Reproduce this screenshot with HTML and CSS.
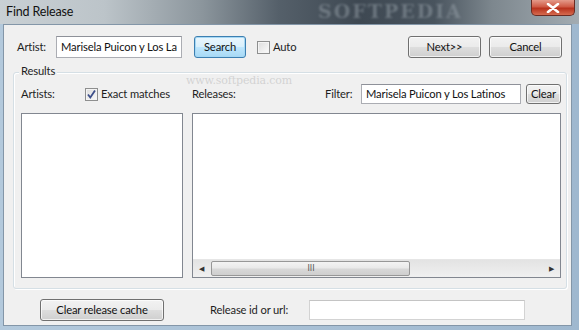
FILE: index.html
```html
<!DOCTYPE html>
<html lang="en">
<head>
    <meta charset="UTF-8">
    <title>Find Release</title>
    <link rel="stylesheet" href="styles.css">
</head>
<body>
    <div class="window">
        <div class="titlebar">
            <span class="title">Find Release</span>
            <span class="watermark">SOFTPEDIA</span>
            <span class="close">
                <svg width="14" height="10" viewBox="0 0 14 10">
                    <path d="M2 1 L12 9 M12 1 L2 9" stroke="#fff" stroke-width="2.6" stroke-linecap="round"/>
                </svg>
            </span>
        </div>
        <div class="client">
            <div class="top-row">
                <span class="lbl artist-lbl">Artist:</span>
                <input type="text" class="field artist-field" value="Marisela Puicon y Los Latinos">
                <button class="btn focused search-btn">Search</button>
                <span class="check auto-check"></span>
                <span class="lbl">Auto</span>
                <span class="spacer"></span>
                <button class="btn wide-btn">Next&gt;&gt;</button>
                <button class="btn wide-btn cancel-btn">Cancel</button>
            </div>

            <div class="group">
                <span class="legend">Results</span>
                <span class="site-mark">www.softpedia.com</span>
                <div class="group-row">
                    <span class="lbl artists-lbl">Artists:</span>
                    <span class="check checked">
                        <svg width="11" height="11" viewBox="0 0 11 11">
                            <path d="M2 5.5 L4.3 8.5 L9 1.5" fill="none" stroke="#3d4f8a" stroke-width="1.8"/>
                        </svg>
                    </span>
                    <span class="lbl exact-lbl">Exact matches</span>
                    <span class="lbl releases-lbl">Releases:</span>
                    <span class="spacer"></span>
                    <span class="lbl filter-lbl">Filter:</span>
                    <input type="text" class="field filter-field" value="Marisela Puicon y Los Latinos">
                    <button class="btn small-btn">Clear</button>
                </div>
                <div class="lists">
                    <div class="listbox artists-list"></div>
                    <div class="listbox releases-list">
                        <div class="hscroll">
                            <span class="arrow">&#9664;</span>
                            <div class="track">
                                <div class="thumb"><span class="grip">III</span></div>
                            </div>
                            <span class="arrow">&#9654;</span>
                        </div>
                    </div>
                </div>
            </div>

            <div class="bottom-row">
                <button class="btn cache-btn">Clear release cache</button>
                <span class="lbl release-lbl">Release id or url:</span>
                <input type="text" class="field release-field">
            </div>
        </div>
    </div>
</body>
</html>
```

FILE: styles.css
```css
html, body {
    margin: 0;
    padding: 0;
}
body {
    width: 579px;
    height: 330px;
    overflow: hidden;
    font-family: Lato, "Liberation Sans", sans-serif;
    font-size: 11.2px;
    letter-spacing: -0.15px;
    color: #1e1e1e;
}
.window {
    width: 579px;
    height: 330px;
    box-sizing: border-box;
    display: flex;
    flex-direction: column;
    background: linear-gradient(90deg, #b3c9dc, #9fb8cf);
    padding: 0 7px 4px 3px;
}
.titlebar {
    height: 24px;
    margin: 0 -7px 0 -3px;
    display: flex;
    align-items: center;
    position: relative;
    overflow: hidden;
    background: linear-gradient(90deg, #c9d0d4 0%, #bcc4c9 18%, #8b959c 35%, #55606a 48%, #3e4852 62%, #49545e 75%, #7d878e 85%, #a3acb2 100%);
}
.title {
    margin-left: 6px;
    margin-top: -2px;
    font-size: 12.5px;
    color: #111;
}
.watermark {
    position: absolute;
    left: 318px;
    top: 0;
    font-family: "DejaVu Serif", serif;
    font-weight: bold;
    font-size: 19px;
    line-height: 22px;
    letter-spacing: 2px;
    color: rgba(150, 160, 168, 0.5);
    filter: blur(1.2px);
}
.close {
    position: absolute;
    left: 531px;
    top: 0;
    width: 44px;
    height: 16px;
    box-sizing: border-box;
    border: 1px solid #6b2b22;
    border-top: none;
    border-radius: 0 0 5px 5px;
    background: linear-gradient(#e49a8a, #cf5a45 45%, #b8321d 55%, #d56b4f);
    display: flex;
    align-items: center;
    justify-content: center;
}
.client {
    flex: 1;
    background: #f0f0f0;
    border: 1px solid #8396a8;
    display: flex;
    flex-direction: column;
    position: relative;
}
.lbl {
    white-space: nowrap;
    padding-bottom: 2px;
}
.spacer {
    flex: 1;
}
.top-row {
    display: flex;
    align-items: center;
    height: 22px;
    margin-top: 11px;
}
.artist-lbl {
    margin-left: 13px;
    width: 39px;
}
.field {
    box-sizing: border-box;
    height: 22px;
    border: 1px solid #abadb3;
    border-top-color: #8e9199;
    background: #fff;
    font-family: inherit;
    font-size: inherit;
    letter-spacing: inherit;
    color: #111;
    padding: 0 4px 1px;
    margin: 0;
    outline: none;
}
.artist-field {
    width: 126px;
}
.btn {
    box-sizing: border-box;
    height: 22px;
    border: 1px solid #707070;
    border-radius: 3px;
    background: linear-gradient(#f2f2f2 0%, #ebebeb 48%, #dddddd 52%, #cfcfcf 100%);
    font-family: inherit;
    font-size: inherit;
    letter-spacing: inherit;
    color: #111;
    padding: 0 0 2px;
    margin: 0;
    box-shadow: inset 0 0 0 1px rgba(255, 255, 255, 0.7);
}
.focused {
    border-color: #3c7fb1;
    background: linear-gradient(#eaf6fd 0%, #d9f0fc 48%, #bee6fd 52%, #a7d9f5 100%);
    box-shadow: inset 0 0 0 1px #a6d8f4;
}
.search-btn {
    width: 52px;
    margin-left: 12px;
}
.check {
    box-sizing: border-box;
    width: 13px;
    height: 13px;
    border: 1px solid #8e8f8f;
    background: linear-gradient(135deg, #dcdcdc, #fbfbfb);
    box-shadow: inset 0 0 0 1px #f4f4f4;
    display: inline-flex;
    align-items: center;
    justify-content: center;
}
.auto-check {
    margin-left: 11px;
    margin-right: 3px;
}
.wide-btn {
    width: 73px;
}
.cancel-btn {
    margin-left: 8px;
    margin-right: 9px;
}
.group {
    position: relative;
    margin: 14px 4px 0 9px;
    height: 215px;
    border: 1px solid #d5dfe5;
    border-radius: 3px;
    box-shadow: inset 1px 1px 0 #fff, 1px 1px 0 #fff;
    display: flex;
    flex-direction: column;
}
.legend {
    position: absolute;
    left: 5px;
    top: -9px;
    padding: 0 2px;
    background: #f0f0f0;
}
.site-mark {
    position: absolute;
    left: 172px;
    top: 1px;
    font-family: "DejaVu Serif", serif;
    font-size: 11px;
    color: rgba(190, 190, 190, 0.6);
}
.group-row {
    display: flex;
    align-items: center;
    height: 20px;
    margin-top: 11px;
}
.artists-lbl {
    margin-left: 7px;
    width: 64px;
}
.exact-lbl {
    margin-left: 3px;
    width: 91px;
}
.filter-lbl {
    width: 36px;
}
.filter-field {
    width: 160px;
    height: 20px;
}
.small-btn {
    width: 35px;
    height: 20px;
    margin-left: 5px;
    margin-right: 5px;
}
.lists {
    display: flex;
    margin-top: 9px;
    margin-left: 7px;
}
.listbox {
    box-sizing: border-box;
    height: 165px;
    border: 1px solid #828790;
    background: #fff;
}
.artists-list {
    width: 162px;
}
.releases-list {
    width: 369px;
    margin-left: 9px;
    display: flex;
    flex-direction: column;
    justify-content: flex-end;
}
.hscroll {
    height: 17px;
    display: flex;
    align-items: center;
    background: linear-gradient(#e3e3e3, #f0f0f0);
    border-top: 1px solid #e6e6e6;
}
.arrow {
    width: 17px;
    text-align: center;
    font-size: 7px;
    color: #333;
}
.track {
    flex: 1;
    height: 17px;
    display: flex;
    align-items: center;
}
.thumb {
    box-sizing: border-box;
    width: 199px;
    height: 15px;
    margin-left: 1px;
    border: 1px solid #979797;
    border-radius: 2px;
    background: linear-gradient(#f3f3f3 0%, #e9e9e9 48%, #d8d8d8 52%, #cfcfcf 100%);
    display: flex;
    align-items: center;
    justify-content: center;
}
.grip {
    font-family: "DejaVu Sans", sans-serif;
    font-size: 8px;
    letter-spacing: 0;
    color: #555;
    margin-left: 1px;
}
.bottom-row {
    display: flex;
    align-items: center;
    margin-top: 10px;
    height: 22px;
}
.cache-btn {
    width: 124px;
    margin-left: 36px;
}
.release-lbl {
    margin-left: 46px;
    width: 99px;
}
.release-field {
    width: 216px;
    height: 20px;
    border-color: #d3d3d3;
    border-top-color: #c4c4c4;
}
```
